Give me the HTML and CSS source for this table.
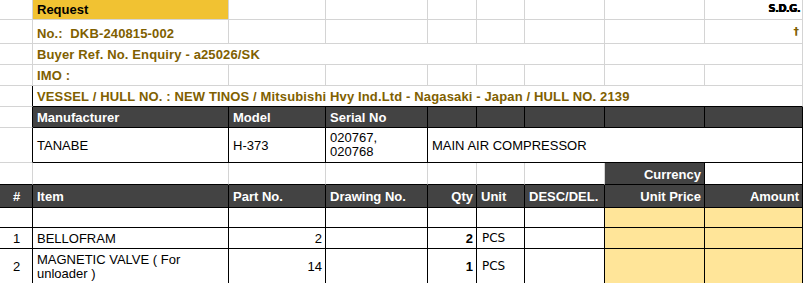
FILE: index.html
```html
<!DOCTYPE html>
<html>
<head>
<meta charset="utf-8">
<link rel="stylesheet" href="styles.css">
</head>
<body>
<div class="sheet">
  <!-- Row 1 -->
  <div class="c r1"></div>
  <div class="c r1 title">Request</div>
  <div class="c r1"></div>
  <div class="c r1"></div>
  <div class="c r1"></div>
  <div class="c r1"></div>
  <div class="c r1"></div>
  <div class="c r1"></div>
  <div class="c r1 right sdg">S.D.G.</div>

  <!-- Row 2 -->
  <div class="c"></div>
  <div class="c brown">No.:&nbsp; DKB-240815-002</div>
  <div class="c"></div>
  <div class="c"></div>
  <div class="c"></div>
  <div class="c"></div>
  <div class="c"></div>
  <div class="c"></div>
  <div class="c brown right cross">†</div>

  <!-- Row 3 -->
  <div class="c"></div>
  <div class="c brown span6">Buyer Ref. No. Enquiry - a25026/SK</div>
  <div class="c span2"></div>

  <!-- Row 4 -->
  <div class="c"></div>
  <div class="c brown">IMO :</div>
  <div class="c"></div>
  <div class="c"></div>
  <div class="c"></div>
  <div class="c"></div>
  <div class="c"></div>
  <div class="c"></div>
  <div class="c"></div>

  <!-- Row 5 -->
  <div class="c bkr"></div>
  <div class="c brown span8 bkb">VESSEL / HULL NO. : NEW TINOS / Mitsubishi Hvy Ind.Ltd - Nagasaki - Japan / HULL NO. 2139</div>

  <!-- Row 6 -->
  <div class="c bkr mid"></div>
  <div class="c dark">Manufacturer</div>
  <div class="c dark">Model</div>
  <div class="c dark">Serial No</div>
  <div class="c dark"></div>
  <div class="c dark"></div>
  <div class="c dark"></div>
  <div class="c dark"></div>
  <div class="c dark"></div>

  <!-- Row 7 -->
  <div class="c bkr mid"></div>
  <div class="c data">TANABE</div>
  <div class="c data">H-373</div>
  <div class="c data tight">020767,<br>020768</div>
  <div class="c data span5">MAIN AIR COMPRESSOR</div>

  <!-- Row 8 -->
  <div class="c bkb"></div>
  <div class="c bkb"></div>
  <div class="c bkb"></div>
  <div class="c bkb"></div>
  <div class="c bkb"></div>
  <div class="c bkb"></div>
  <div class="c bkb"></div>
  <div class="c dark right">Currency</div>
  <div class="c data"></div>

  <!-- Row 9 -->
  <div class="c dark center">#</div>
  <div class="c dark">Item</div>
  <div class="c dark">Part No.</div>
  <div class="c dark">Drawing No.</div>
  <div class="c dark right">Qty</div>
  <div class="c dark">Unit</div>
  <div class="c dark">DESC/DEL.</div>
  <div class="c dark right">Unit Price</div>
  <div class="c dark right">Amount</div>

  <!-- Row 10 -->
  <div class="c data"></div>
  <div class="c data"></div>
  <div class="c data"></div>
  <div class="c data"></div>
  <div class="c data"></div>
  <div class="c data"></div>
  <div class="c data"></div>
  <div class="c data fill"></div>
  <div class="c data fill"></div>

  <!-- Row 11 -->
  <div class="c data center">1</div>
  <div class="c data">BELLOFRAM</div>
  <div class="c data right">2</div>
  <div class="c data"></div>
  <div class="c data right bold">2</div>
  <div class="c data unit">PCS</div>
  <div class="c data"></div>
  <div class="c data fill"></div>
  <div class="c data fill"></div>

  <!-- Row 12 -->
  <div class="c data center">2</div>
  <div class="c data tight">MAGNETIC VALVE ( For<br>unloader )</div>
  <div class="c data right">14</div>
  <div class="c data"></div>
  <div class="c data right bold">1</div>
  <div class="c data unit">PCS</div>
  <div class="c data"></div>
  <div class="c data fill"></div>
  <div class="c data fill"></div>
</div>
</body>
</html>
```

FILE: styles.css
```css
html, body {
  margin: 0;
  padding: 0;
  background: #ffffff;
}

.sheet {
  display: grid;
  grid-template-columns: 33px 196px 97px 102px 49px 48px 80px 100px 98px;
  grid-template-rows: 20px 24px 21px 21px 21px 21px 35px 22px 23px 20px 21px 36px;
  font-family: "Liberation Sans", Arial, sans-serif;
  font-size: 13px;
  line-height: 15px;
  color: #000;
}

.c {
  box-sizing: border-box;
  border-right: 1px solid #d4d4d4;
  border-bottom: 1px solid #d4d4d4;
  padding: 0 3px 2px 4px;
  display: flex;
  align-items: flex-end;
  white-space: nowrap;
  overflow: visible;
  min-width: 0;
}

.span2 { grid-column: span 2; }
.span5 { grid-column: span 5; }
.span6 { grid-column: span 6; }
.span8 { grid-column: span 8; }

.title {
  background: #f1c232;
  font-weight: bold;
  color: #000;
}

.brown {
  color: #7f6000;
  font-weight: bold;
  letter-spacing: 0.14px;
}

.right { justify-content: flex-end; }
.center { justify-content: center; }
.bold { font-weight: bold; }

.sdg {
  font-family: "DejaVu Sans Condensed", "DejaVu Sans", sans-serif;
  font-stretch: condensed;
  font-weight: bold;
  font-size: 11px;
  letter-spacing: -0.5px;
  color: #000;
  padding-right: 2px;
  padding-bottom: 3px;
  text-shadow: 0.5px 0 0 #000, 0 0.4px 0 #000;
}

.cross {
  font-family: "DejaVu Sans", sans-serif;
  font-weight: bold;
  font-size: 11px;
  letter-spacing: 0;
  padding-right: 3px;
  padding-bottom: 4px;
}

.bkr { border-right-color: #000; }
.bkb { border-bottom-color: #000; }
.mid { align-items: center; }

.dark {
  background: #434343;
  color: #ffffff;
  font-weight: bold;
  border-right-color: #000;
  border-bottom-color: #000;
  align-items: center;
  padding-bottom: 0;
  padding-top: 1px;
}

.data {
  border-right-color: #000;
  border-bottom-color: #000;
  align-items: center;
  padding-bottom: 0;
}

.tight {
  line-height: 14px;
  white-space: normal;
}

.unit {
  font-family: "DejaVu Sans", sans-serif;
  font-size: 12px;
  padding-left: 5px;
}

.fill { background: #ffe599; }
```
